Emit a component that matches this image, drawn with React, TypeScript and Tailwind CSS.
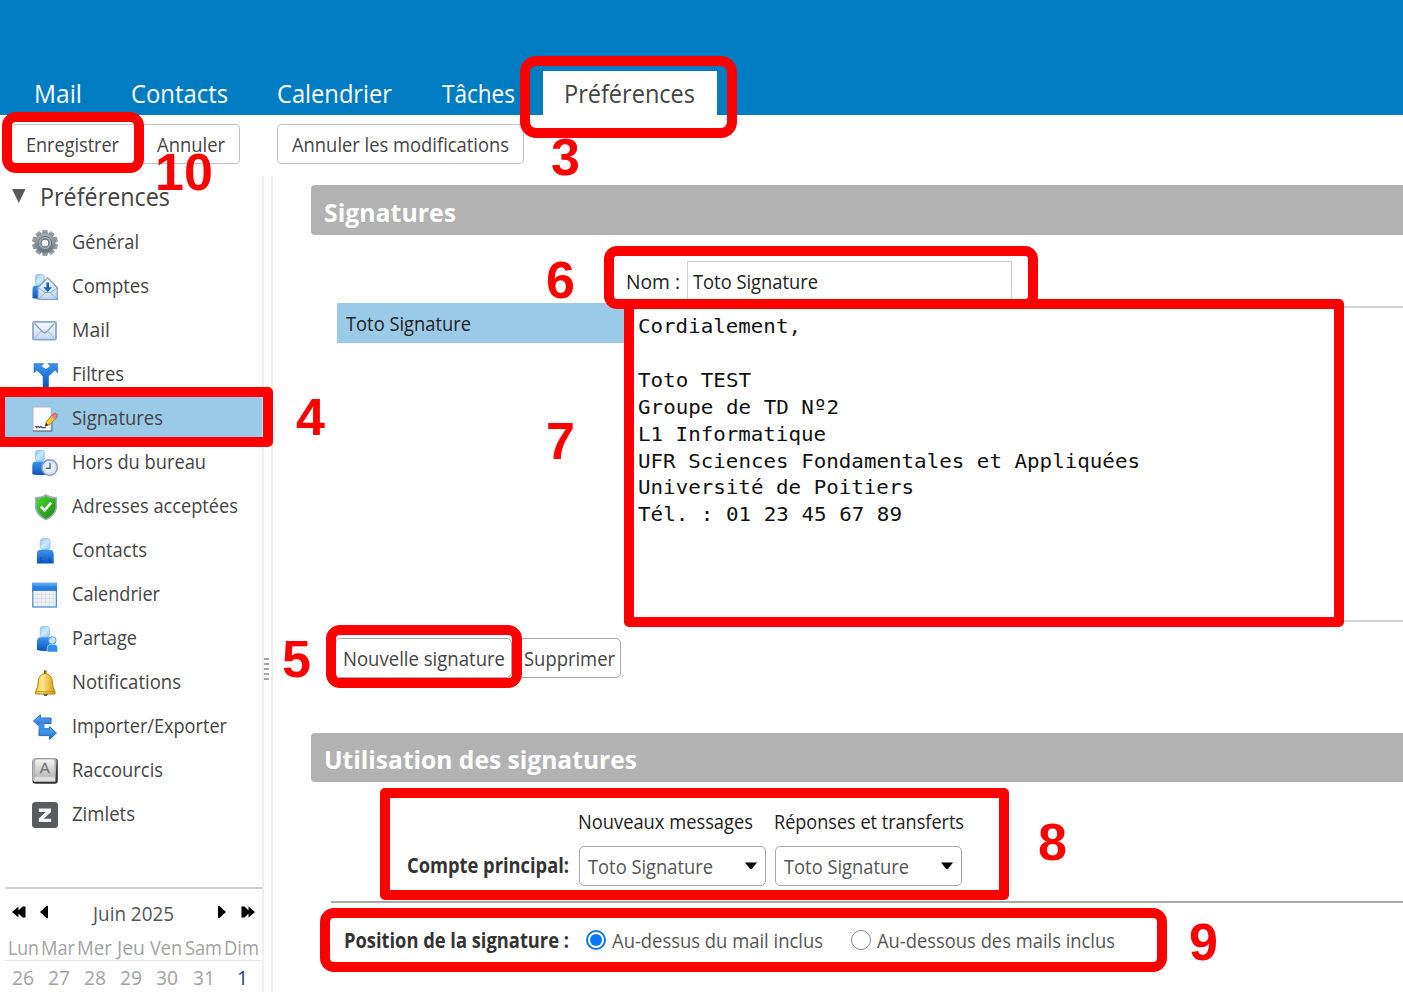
import { useLayoutEffect, useRef, useState, type ReactNode } from "react";

/** One line of text, condensed horizontally to the width of its box. */
function Fit({ className, children }: { className: string; children: ReactNode }) {
  const outer = useRef<HTMLSpanElement>(null);
  const inner = useRef<HTMLSpanElement>(null);
  const [scale, setScale] = useState(1);
  useLayoutEffect(() => {
    if (outer.current && inner.current) {
      setScale(outer.current.getBoundingClientRect().width / inner.current.getBoundingClientRect().width);
    }
  }, []);
  return (
    <span ref={outer} className={`block shrink-0 ${className}`}>
      <span ref={inner} className="inline-block origin-left whitespace-pre" style={{ transform: `scaleX(${scale})` }}>
        {children}
      </span>
    </span>
  );
}

function Defs() {
  return (
    <svg className="absolute size-0" aria-hidden="true">
      <defs>
        <linearGradient id="head" x1="0" y1="0" x2="1" y2="1">
          <stop offset="0" stopColor="#8cc6f4" />
          <stop offset="0.5" stopColor="#cfeafd" />
          <stop offset="1" stopColor="#8fc6f2" />
        </linearGradient>
        <linearGradient id="body" x1="0" y1="0" x2="0" y2="1">
          <stop offset="0" stopColor="#3c93ee" />
          <stop offset="1" stopColor="#0b55bd" />
        </linearGradient>
        <linearGradient id="steel" x1="0" y1="0" x2="0" y2="1">
          <stop offset="0" stopColor="#a9b1b8" />
          <stop offset="1" stopColor="#68727b" />
        </linearGradient>
        <linearGradient id="paper" x1="0" y1="0" x2="0" y2="1">
          <stop offset="0" stopColor="#f6faff" />
          <stop offset="1" stopColor="#c4d9f2" />
        </linearGradient>
        <linearGradient id="green" x1="0" y1="0" x2="1" y2="1">
          <stop offset="0" stopColor="#57d633" />
          <stop offset="1" stopColor="#0d8a0b" />
        </linearGradient>
        <linearGradient id="gold" x1="0" y1="0" x2="1" y2="0">
          <stop offset="0" stopColor="#f3c52f" />
          <stop offset="0.35" stopColor="#ffe98a" />
          <stop offset="1" stopColor="#d79a08" />
        </linearGradient>
        <linearGradient id="blue" x1="0" y1="0" x2="0" y2="1">
          <stop offset="0" stopColor="#62b2f8" />
          <stop offset="1" stopColor="#1668cc" />
        </linearGradient>
        <linearGradient id="key" x1="0" y1="0" x2="0" y2="1">
          <stop offset="0" stopColor="#f4f4f4" />
          <stop offset="1" stopColor="#bcbcbc" />
        </linearGradient>
      </defs>
    </svg>
  );
}

function Svg({ children }: { children: ReactNode }) {
  return (
    <svg viewBox="0 0 26 26" className="size-[26px] shrink-0">
      {children}
    </svg>
  );
}

const teeth = [0, 36, 72, 108, 144, 180, 216, 252, 288, 324];

const GearIcon = (
  <Svg>
    <g fill="url(#steel)" stroke="#737d86" strokeWidth="0.6">
      {teeth.map((a) => (
        <path key={a} d="M10.2 5 L10.9 0.4 H15.1 L15.8 5 Z" transform={`rotate(${a} 13 13)`} />
      ))}
    </g>
    <circle cx="13" cy="13" r="9.8" fill="url(#steel)" />
    <circle cx="13" cy="13" r="6.6" fill="#a2abb2" stroke="#6c7780" strokeWidth="1" />
    <circle cx="13" cy="13" r="3.9" fill="#fff" stroke="#5e6972" strokeWidth="1.1" />
  </Svg>
);

const AccountsIcon = (
  <Svg>
    <rect x="3.6" y="0.5" width="8.6" height="10.5" rx="2" fill="url(#head)" stroke="#7fb8e8" strokeWidth="0.8" />
    <path d="M0.5 24 V15 Q0.5 11.5 4 11.5 H13 V24 Q8 26 0.5 24 Z" fill="url(#body)" />
    <path d="M6 13.5 L15.7 3.8 L25.3 13.5 V25.3 H6 Z" fill="url(#paper)" stroke="#7e9cc4" strokeWidth="1.2" />
    <path d="M6.5 25 L13.5 18.5 H18 L25 25 M6.5 14 L13.5 19 M25 14 L18 19" fill="none" stroke="#93add0" strokeWidth="1" />
    <path d="M14.4 8.5 H17 V13.2 H20 L15.7 18 L11.3 13.2 H14.4 Z" fill="#1a61c8" />
  </Svg>
);

const MailIcon = (
  <Svg>
    <rect x="1" y="3.8" width="23" height="17.8" rx="1" fill="url(#paper)" stroke="#8aa6cb" strokeWidth="1.7" />
    <path d="M2.5 5.5 L10.7 14 Q12.5 15.7 14.3 14 L22.5 5.5" fill="none" stroke="#7f9cc2" strokeWidth="1.1" />
    <path d="M2.5 20.3 L9.3 12.8 M22.5 20.3 L15.7 12.8" fill="none" stroke="#9db6d6" strokeWidth="1" />
  </Svg>
);

const FilterIcon = (
  <Svg>
    <path
      d="M2 1.5 L11.8 1.5 L9.3 4.2 L13.8 7.6 L18.3 4.2 L15.8 1.5 H25.8 V11 L23 8.2 L16.6 14 V25.5 H11 V14 L4.8 8.2 L2 11 Z"
      fill="url(#body)"
      stroke="#1f6fd2"
      strokeWidth="0.5"
    />
  </Svg>
);

const SignatureIcon = (
  <Svg>
    <rect x="0.8" y="0.8" width="18.6" height="24.2" fill="#fbfcff" stroke="#a5bcda" strokeWidth="1.5" />
    <path d="M1 25.2 H20 V9" fill="none" stroke="#6b7f99" strokeWidth="1.2" />
    <path d="M3.5 20 l1.2 1.6 l1.4 -1.2 l1.4 1.2 l1.4 -1 l1.4 1 h3.5" fill="none" stroke="#444" strokeWidth="1.2" />
    <path d="M13.2 20.2 L14.4 15.6 L20.6 8.6 L24.3 11.8 L18 18.6 Z" fill="#f5cb28" stroke="#8f6d10" strokeWidth="0.8" />
    <path d="M13.2 20.2 L14 17 L16.2 19 Z" fill="#222" />
    <path d="M19.6 9.8 L21.2 7.9 Q23 6.4 24.8 8 Q26.2 9.7 24.9 11.2 L23.3 12.9 Z" fill="#ef7d78" stroke="#b3514e" strokeWidth="0.7" />
    <path d="M19.1 10.2 L22.9 13.4" stroke="#aab2bd" strokeWidth="1.6" />
  </Svg>
);

const OutOfOfficeIcon = (
  <Svg>
    <rect x="3.6" y="0.5" width="8.6" height="10.5" rx="2" fill="url(#head)" stroke="#7fb8e8" strokeWidth="0.8" />
    <path d="M0.3 24.2 V15.5 Q0.3 11.5 4 11.5 H12 Q15.5 11.5 15.5 15.5 V24.2 Q8 26 0.3 24.2 Z" fill="url(#body)" />
    <circle cx="17.6" cy="17.6" r="7.7" fill="#eaf1fa" stroke="#8ba3c2" strokeWidth="1.6" />
    <circle cx="17.6" cy="17.6" r="5.6" fill="none" stroke="#c2d0e2" strokeWidth="0.8" />
    <path d="M18 13 V18.2 H13.8" fill="none" stroke="#5c7390" strokeWidth="1.5" />
  </Svg>
);

const ShieldIcon = (
  <Svg>
    <path
      d="M14 0.8 Q18.5 4 24.3 3.8 V13 Q23.6 21 14 25.6 Q4.4 21 3.7 13 V3.8 Q9.5 4 14 0.8 Z"
      fill="url(#green)"
      stroke="#9fb0c3"
      strokeWidth="1.6"
    />
    <path d="M8.8 12.5 L12.6 16.3 L19.2 8.6" fill="none" stroke="#fff" strokeWidth="2.5" />
  </Svg>
);

const PersonIcon = (
  <Svg>
    <rect x="8.3" y="0.6" width="9.8" height="10.8" rx="3" fill="url(#head)" stroke="#83bceb" strokeWidth="0.7" />
    <path d="M5 25.4 V16 Q5 11.8 9 11.8 H17.5 Q21.7 11.8 21.7 16 V25.4 Z" fill="url(#body)" />
    <path d="M9 25 V19 M17.7 25 V19" stroke="#0a48a6" strokeWidth="0.9" />
  </Svg>
);

const CalendarIcon = (
  <Svg>
    <rect x="0.8" y="1.4" width="23.6" height="23.6" fill="#f0f2f5" stroke="#4a8fdc" strokeWidth="1.3" />
    <rect x="0.3" y="0.8" width="24.7" height="8" fill="url(#blue)" />
    <path d="M1 5 H24.4" stroke="#2b7ee0" strokeWidth="1.6" />
    <path d="M5.5 9.5 V24 M9.5 9.5 V24 M13.5 9.5 V24 M17.5 9.5 V24 M21.3 9.5 V24 M2 12.5 H24 M2 16.3 H24 M2 20.2 H24" stroke="#dadde2" strokeWidth="0.9" />
  </Svg>
);

const ShareIcon = (
  <Svg>
    <rect x="8.3" y="0.6" width="9.2" height="10.5" rx="2" fill="url(#head)" stroke="#83bceb" strokeWidth="0.7" />
    <path d="M5 24 V15.5 Q5 11.3 9 11.3 H17 Q20.5 11.3 20.5 15 V24 Q12 26 5 24 Z" fill="url(#body)" />
    <circle cx="20.3" cy="14.4" r="3.8" fill="url(#head)" stroke="#4c98e6" strokeWidth="0.9" />
    <path d="M15.2 26 V22 Q15.2 18.4 18.5 18.4 H22.3 Q25.6 18.4 25.6 22 V26 Z" fill="#2f8df2" stroke="#c5e2fb" strokeWidth="0.7" />
  </Svg>
);

const BellIcon = (
  <Svg>
    <path d="M12 0.3 H14.6 V4 H12 Z" fill="#8a6a1c" />
    <path d="M11 24 H15.8 L14.5 26 H12.3 Z" fill="#6e4a12" />
    <path
      d="M13.3 3.6 Q20.2 4.2 20.4 12 Q20.6 18 23 21.6 V24 H3.6 V21.6 Q6 18 6.2 12 Q6.4 4.2 13.3 3.6 Z"
      fill="url(#gold)"
      stroke="#a77d12"
      strokeWidth="0.9"
    />
    <path d="M4.2 21.7 H22.4" stroke="#b58612" strokeWidth="0.9" />
  </Svg>
);

const ImportIcon = (
  <Svg>
    <path d="M1.5 7 L8.4 0.7 V4 H19 V9.6 H8.4 V13.2 Z" fill="url(#blue)" stroke="#1b60b4" strokeWidth="0.9" />
    <path d="M24.4 19 L17.6 12.6 V15.6 H7 V21.6 H17.6 V25.4 Z" fill="url(#blue)" stroke="#1b60b4" strokeWidth="0.9" />
    <path d="M6.6 9.2 H12.5 V14 H17 V16.2 H6.6 Z" fill="#3b8fe6" />
  </Svg>
);

const KeyIcon = (
  <Svg>
    <rect x="0.5" y="0.5" width="25.3" height="25.3" rx="3" fill="#333" />
    <path d="M0.7 3 Q0.7 0.7 3 0.7 H23 Q24.6 0.7 24.6 3 L23.4 23.6 H2 Q0.7 23 0.7 21 Z" fill="#b4b4b4" />
    <rect x="3.2" y="1.4" width="19.2" height="17.2" rx="2" fill="url(#key)" />
    <path d="M3 18.8 H22.5 L23.4 23.6 H1.8 Z" fill="#dedede" />
    <text x="12.8" y="14.5" textAnchor="middle" fontFamily="Liberation Sans" fontSize="15" fill="#777" stroke="#777" strokeWidth="0.3">
      A
    </text>
  </Svg>
);

const ZimletIcon = (
  <Svg>
    <rect x="0" y="0" width="26" height="26" rx="3.5" fill="#5a5b5e" />
    <path d="M6.8 6.6 H19 V9.9 L11.8 16.7 H19.2 V20 H6.8 V16.6 L13.8 9.9 H6.8 Z" fill="#f4f4f4" />
  </Svg>
);

const items: { label: string; icon: ReactNode; width: string; active?: boolean }[] = [
  { label: "Général", icon: GearIcon, width: "w-[67px]" },
  { label: "Comptes", icon: AccountsIcon, width: "w-[77px]" },
  { label: "Mail", icon: MailIcon, width: "w-[38px]" },
  { label: "Filtres", icon: FilterIcon, width: "w-[52px]" },
  { label: "Signatures", icon: SignatureIcon, width: "w-[91px]", active: true },
  { label: "Hors du bureau", icon: OutOfOfficeIcon, width: "w-[134px]" },
  { label: "Adresses acceptées", icon: ShieldIcon, width: "w-[166px]" },
  { label: "Contacts", icon: PersonIcon, width: "w-[75px]" },
  { label: "Calendrier", icon: CalendarIcon, width: "w-[88px]" },
  { label: "Partage", icon: ShareIcon, width: "w-[65px]" },
  { label: "Notifications", icon: BellIcon, width: "w-[109px]" },
  { label: "Importer/Exporter", icon: ImportIcon, width: "w-[155px]" },
  { label: "Raccourcis", icon: KeyIcon, width: "w-[91px]" },
  { label: "Zimlets", icon: ZimletIcon, width: "w-[63px]" },
];

const tabs = [
  { label: "Mail", cls: "w-[48px] ml-[34px]" },
  { label: "Contacts", cls: "w-[97px] ml-[49px]" },
  { label: "Calendrier", cls: "w-[115px] ml-[49px]" },
  { label: "Tâches", cls: "w-[73px] ml-[50px]" },
];

const weekdays = [
  { label: "Lun", cls: "w-[31px] ml-[8px]" },
  { label: "Mar", cls: "w-[34px] ml-[2px]" },
  { label: "Mer", cls: "w-[35px] ml-[2px]" },
  { label: "Jeu", cls: "w-[28px] ml-[5px]" },
  { label: "Ven", cls: "w-[32px] ml-[5px]" },
  { label: "Sam", cls: "w-[37px] ml-[3px]" },
  { label: "Dim", cls: "w-[35px] ml-[2px]" },
];

const days = [
  { label: "26", cls: "w-[22px] ml-[12px]" },
  { label: "27", cls: "w-[22px] ml-[14px]" },
  { label: "28", cls: "w-[22px] ml-[14px]" },
  { label: "29", cls: "w-[22px] ml-[14px]" },
  { label: "30", cls: "w-[22px] ml-[14px]" },
  { label: "31", cls: "w-[22px] ml-[15px]" },
  { label: "1", cls: "w-[11px] ml-[22px] text-[#1f3c6e]" },
];

const lines = [
  { text: "Cordialement,", cls: "w-[163px]" },
  { text: "", cls: "" },
  { text: "Toto TEST", cls: "w-[113px]" },
  { text: "Groupe de TD Nº2", cls: "w-[201px]" },
  { text: "L1 Informatique", cls: "w-[188px]" },
  { text: "UFR Sciences Fondamentales et Appliquées", cls: "w-[502px]" },
  { text: "Université de Poitiers", cls: "w-[276px]" },
  { text: "Tél. : 01 23 45 67 89", cls: "w-[264px]" },
];

function Select() {
  return (
    <div className="flex h-10 w-[187px] items-center rounded-[5px] border-[1.5px] border-[#a8a8a8] pl-[8px] text-[#555]">
      <Fit className="w-[125px]">Toto Signature</Fit>
      <svg viewBox="0 0 12 8" className="ml-[32px] h-2 w-3 shrink-0">
        <path d="M0 0.5 H12 L6.8 7 H5.2 Z" fill="#000" />
      </svg>
    </div>
  );
}

const boxes = [
  "left-[520px] top-[56px] h-[82px] w-[217px] rounded-[16px]",
  "left-[2px] top-[112px] h-[61px] w-[142px] rounded-[14px]",
  "left-[-5px] top-[387px] h-[60px] w-[278px] rounded-[5px]",
  "left-[604px] top-[246px] h-[63px] w-[434px] rounded-[13px]",
  "left-[624px] top-[299px] h-[328px] w-[720px] rounded-[5px]",
  "left-[326px] top-[625px] h-[63px] w-[196px] rounded-[14px]",
  "left-[380px] top-[788px] h-[112px] w-[629px] rounded-[5px]",
  "left-[320px] top-[908px] h-[64px] w-[847px] rounded-[14px]",
];

const marks = [
  { n: "3", cls: "left-[551px] top-[128px]" },
  { n: "10", cls: "left-[155px] top-[143px]" },
  { n: "4", cls: "left-[296px] top-[388px]" },
  { n: "5", cls: "left-[282px] top-[630px]" },
  { n: "6", cls: "left-[546px] top-[251px]" },
  { n: "7", cls: "left-[546px] top-[412px]" },
  { n: "8", cls: "left-[1038px] top-[813px]" },
  { n: "9", cls: "left-[1189px] top-[913px]" },
];

export default function App() {
  return (
    <div className="relative flex h-[992px] w-[1403px] flex-col overflow-hidden bg-white font-['Open_Sans','Noto_Sans',sans-serif] text-[20.5px] leading-[30px] text-[#444]">
      <Defs />

      <header className="flex h-[115px] shrink-0 items-end bg-[#007cc3] text-[25.5px] text-white">
        {tabs.map((t) => (
          <div key={t.label} className="flex h-11 items-center">
            <Fit className={t.cls}>{t.label}</Fit>
          </div>
        ))}
        <div className="ml-[28px] flex h-11 w-[174px] items-center bg-white pl-[21px] text-[#444]">
          <Fit className="w-[131px]">Préférences</Fit>
        </div>
      </header>

      <div className="flex h-[61px] shrink-0 pl-[11px] pt-[9px]">
        <div className="flex h-10 w-[125px] items-center rounded-[4px] border-[1.5px] border-[#c4c4c4] pl-[14px]">
          <Fit className="w-[93px]">Enregistrer</Fit>
        </div>
        <div className="ml-[5px] flex h-10 w-[99px] items-center rounded-[4px] border-[1.5px] border-[#c4c4c4] pl-[15px]">
          <Fit className="w-[68px]">Annuler</Fit>
        </div>
        <div className="ml-[37px] flex h-10 w-[247px] items-center rounded-[4px] border-[1.5px] border-[#c4c4c4] pl-[14px]">
          <Fit className="w-[217px]">Annuler les modifications</Fit>
        </div>
      </div>

      <div className="flex min-h-0 grow">
        <aside className="flex w-[262px] shrink-0 flex-col">
          <div className="flex h-[43px] shrink-0 items-center pb-[3px] pl-[12px] text-[25.5px]">
            <svg viewBox="0 0 14 14" className="size-[14px] shrink-0">
              <path d="M0 0 H13.5 L6.8 14 Z" fill="#5a5a5a" />
            </svg>
            <Fit className="ml-[14px] w-[130px]">Préférences</Fit>
          </div>
          {items.map((it) => (
            <div
              key={it.label}
              className={`ml-[5px] flex h-[44px] shrink-0 items-center pl-[27px] ${it.active ? "bg-[#9acae8]" : ""}`}
            >
              <div className="mt-[3px] flex">{it.icon}</div>
              <Fit className={`ml-[14px] ${it.width}`}>{it.label}</Fit>
            </div>
          ))}
          <div className="ml-[5px] mt-[52px] h-[2px] shrink-0 bg-[#cfcfcf]" />
          <div className="flex h-[44px] shrink-0 items-center pl-[12px] pt-[3px] text-[#555]">
            <svg viewBox="0 0 14 12" className="mb-[2px] h-3 w-[14px] shrink-0">
              <path d="M0 6 L6.5 0.5 V4.6 L10.5 0.5 H13.5 V11.5 H10.5 L6.5 7.4 V11.5 Z" fill="#000" />
            </svg>
            <svg viewBox="0 0 8 12" className="mb-[2px] ml-[14px] h-3 w-2 shrink-0">
              <path d="M0 6 L6.5 0 H8 V12 H6.5 Z" fill="#000" />
            </svg>
            <Fit className="ml-[45px] w-[81px]">Juin 2025</Fit>
            <svg viewBox="0 0 8 12" className="mb-[2px] ml-[44px] h-3 w-2 shrink-0">
              <path d="M8 6 L1.5 0 H0 V12 H1.5 Z" fill="#000" />
            </svg>
            <svg viewBox="0 0 14 12" className="mb-[2px] ml-[15px] h-3 w-[14px] shrink-0">
              <path d="M14 6 L7.5 0.5 V4.6 L3.5 0.5 H0.5 V11.5 H3.5 L7.5 7.4 V11.5 Z" fill="#000" />
            </svg>
          </div>
          <div className="ml-[5px] flex h-[28px] shrink-0 items-center border-b border-[#e8e8e8] text-[#a3a3a3]">
            <div className="-ml-[5px] flex">
              {weekdays.map((d) => (
                <Fit key={d.label} className={d.cls}>
                  {d.label}
                </Fit>
              ))}
            </div>
          </div>
          <div className="flex h-[32px] shrink-0 items-center text-[#a3a3a3]">
            {days.map((d) => (
              <Fit key={d.label} className={d.cls}>
                {d.label}
              </Fit>
            ))}
          </div>
        </aside>

        <div className="flex w-[11px] shrink-0 flex-col items-center border-x-2 border-[#eeeeee] pt-[482px]">
          <div className="-ml-[3px] flex flex-col gap-[3px]">
            {[0, 1, 2, 3, 4].map((i) => (
              <div key={i} className="h-[2px] w-[5px] bg-[#a5a5a5]" />
            ))}
          </div>
        </div>

        <main className="flex grow flex-col pl-[38px] pt-[9px] text-[#222]">
          <div className="flex h-[50px] shrink-0 items-center rounded-l-[4px] bg-[#b2b2b2] pl-[13px] pt-[3px] text-[25px] font-bold text-white">
            <Fit className="w-[132px]">Signatures</Fit>
          </div>

          <section className="flex h-[387px] shrink-0 pl-[26px]">
            <div className="w-[287px] shrink-0 pt-[68px]">
              <div className="flex h-10 items-center bg-[#9acae8] pl-[9px]">
                <Fit className="w-[125px]">Toto Signature</Fit>
              </div>
            </div>
            <div className="flex grow flex-col pt-[26px]">
              <div className="flex h-[45px] items-start">
                <Fit className="ml-[2px] w-[54px] pt-[5px]">Nom :</Fit>
                <div className="ml-[7px] flex h-[42px] w-[325px] items-center border-[1.5px] border-[#d0d0d0] pb-[2px] pl-[5px]">
                  <Fit className="w-[125px]">Toto Signature</Fit>
                </div>
              </div>
              <div className="ml-[4px] h-[316px] border-y-2 border-[#d2d2d2] pl-[10px] pt-[5px] font-['DejaVu_Sans_Mono',monospace] text-[20px] leading-[26.9px] text-[#111]">
                {lines.map((l, i) =>
                  l.text ? (
                    <Fit key={i} className={l.cls}>
                      {l.text}
                    </Fit>
                  ) : (
                    <div key={i} className="h-[26.9px]" />
                  ),
                )}
              </div>
            </div>
          </section>

          <div className="flex h-[111px] shrink-0 pl-[24px] pt-[16px] text-[#444]">
            <div className="flex h-10 w-[177px] items-center rounded-[5px] border-[1.5px] border-[#a8a8a8] pb-[1px] pl-[7px]">
              <Fit className="w-[162px]">Nouvelle signature</Fit>
            </div>
            <div className="ml-[3px] flex h-10 w-[106px] items-center rounded-[5px] border-[1.5px] border-[#a8a8a8] pb-[1px] pl-[8px]">
              <Fit className="w-[91px]">Supprimer</Fit>
            </div>
          </div>

          <div className="flex h-[49px] shrink-0 items-center rounded-l-[4px] bg-[#b2b2b2] pl-[13px] pt-[3px] text-[25px] font-bold text-white">
            <Fit className="w-[313px]">Utilisation des signatures</Fit>
          </div>

          <div className="flex h-[119px] shrink-0 pt-[24px]">
            <div className="w-[268px] shrink-0 pl-[96px] pt-[44px] font-bold text-[#333]">
              <Fit className="w-[162px]">Compte principal:</Fit>
            </div>
            <div className="w-[196px] shrink-0">
              <Fit className="ml-[-1px] mb-[10px] w-[175px]">Nouveaux messages</Fit>
              <Select />
            </div>
            <div>
              <Fit className="ml-[-1px] mb-[10px] w-[190px]">Réponses et transferts</Fit>
              <Select />
            </div>
          </div>

          <div className="ml-[20px] h-[2px] shrink-0 bg-[#a8a8a8]" />

          <div className="flex h-[73px] shrink-0 items-center pl-[33px] text-[#555]">
            <Fit className="w-[225px] font-bold text-[#333]">Position de la signature :</Fit>
            <span className="ml-[17px] flex size-5 items-center justify-center rounded-full border-2 border-[#0b76f5]">
              <span className="size-3 rounded-full bg-[#0b76f5]" />
            </span>
            <Fit className="ml-[6px] w-[211px] pt-[1px]">Au-dessus du mail inclus</Fit>
            <span className="ml-[28px] size-5 rounded-full border-[1.5px] border-[#858585]" />
            <Fit className="ml-[6px] w-[238px] pt-[1px]">Au-dessous des mails inclus</Fit>
          </div>
        </main>
      </div>

      {boxes.map((b) => (
        <div key={b} className={`absolute border-[10px] border-[#ff0000] ${b}`} />
      ))}
      {marks.map((m) => (
        <div key={m.n} className={`absolute font-['Liberation_Sans',sans-serif] text-[52px] leading-[58px] font-bold text-[#ff0000] ${m.cls}`}>
          {m.n}
        </div>
      ))}
    </div>
  );
}
